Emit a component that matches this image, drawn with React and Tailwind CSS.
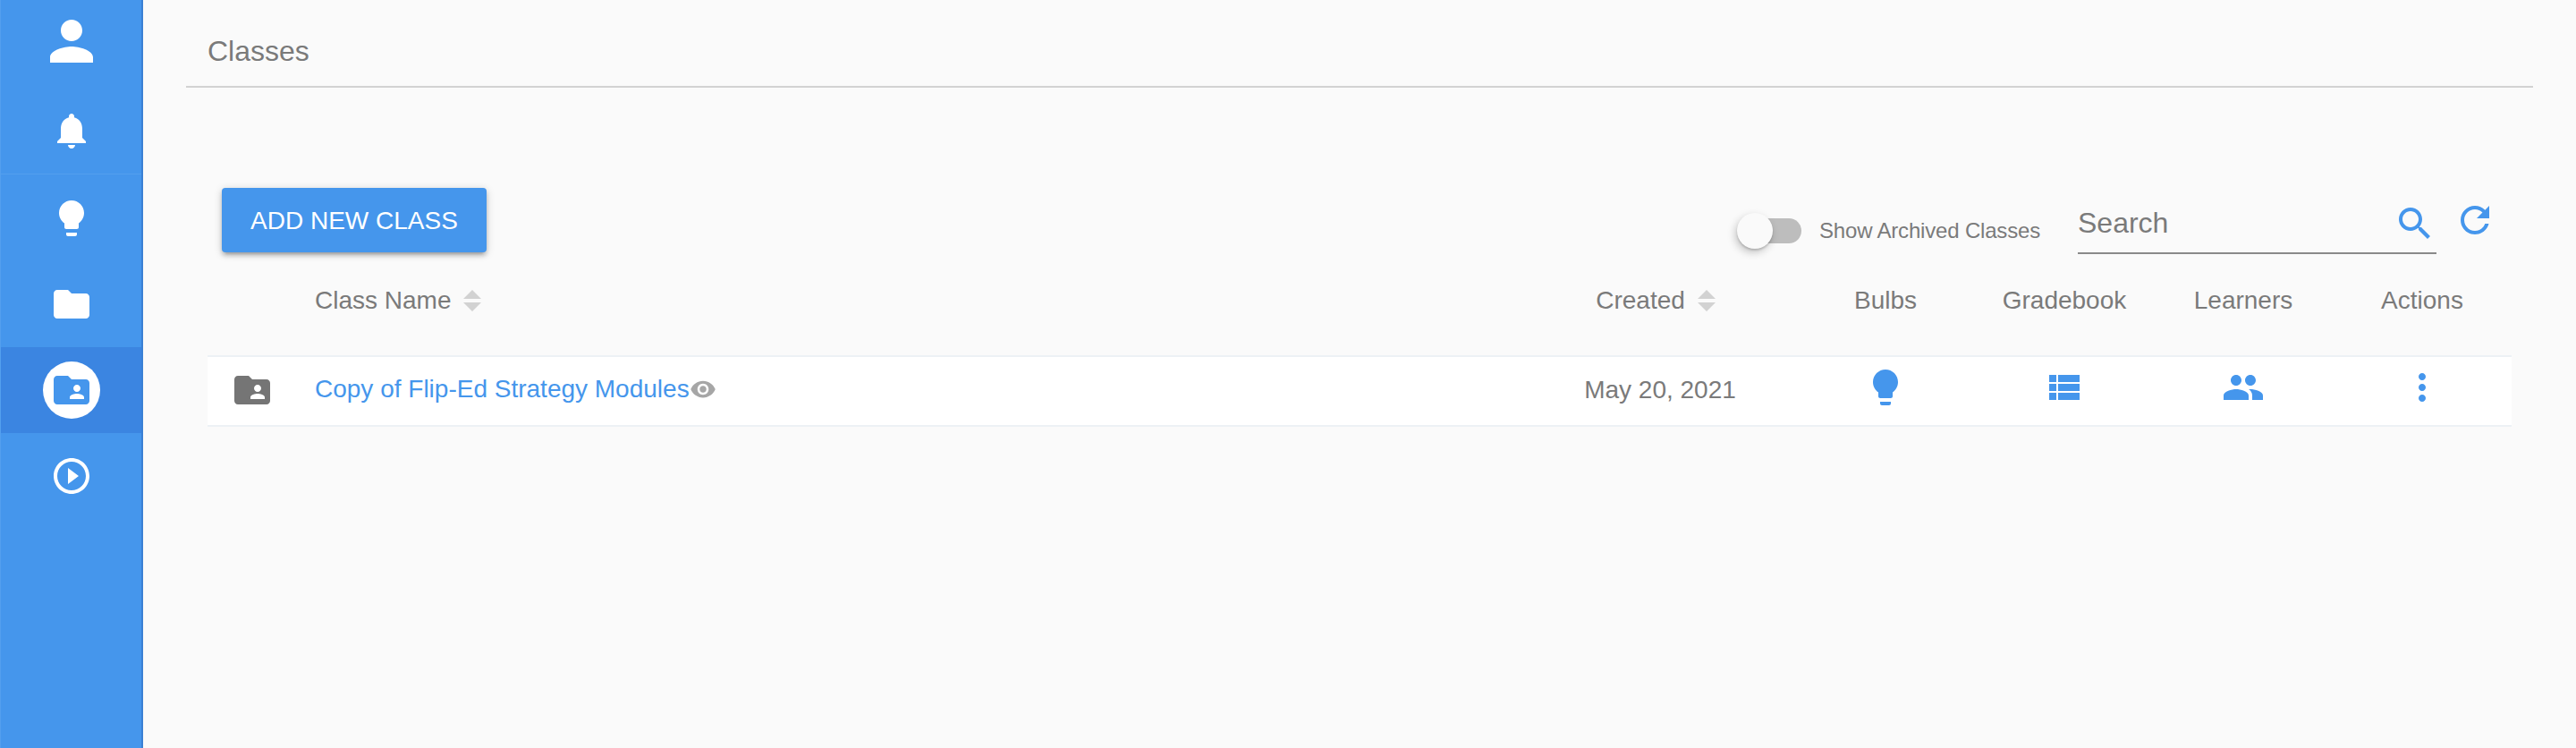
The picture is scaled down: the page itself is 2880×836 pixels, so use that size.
const ICONS = {
  person: "M12 12c2.21 0 4-1.79 4-4s-1.79-4-4-4-4 1.79-4 4 1.79 4 4 4zm0 2c-2.67 0-8 1.34-8 4v2h16v-2c0-2.66-5.33-4-8-4z",
  bell: "M12 22c1.1 0 2-.9 2-2h-4c0 1.1.89 2 2 2zm6-6v-5c0-3.07-1.64-5.64-4.5-6.32V4c0-.83-.67-1.5-1.5-1.5s-1.5.67-1.5 1.5v.68C7.63 5.36 6 7.92 6 11v5l-2 2v1h16v-1l-2-2z",
  bulb: "M9 21c0 .55.45 1 1 1h4c.55 0 1-.45 1-1v-1H9v1zm3-19C8.14 2 5 5.14 5 9c0 2.38 1.19 4.47 3 5.74V17c0 .55.45 1 1 1h6c.55 0 1-.45 1-1v-2.26c1.81-1.27 3-3.36 3-5.74 0-3.86-3.14-7-7-7z",
  folder: "M10 4H4c-1.1 0-1.99.9-1.99 2L2 18c0 1.1.9 2 2 2h16c1.1 0 2-.9 2-2V8c0-1.1-.9-2-2-2h-8l-2-2z",
  folderShared: "M20 6h-8l-2-2H4c-1.1 0-1.99.9-1.99 2L2 18c0 1.1.9 2 2 2h16c1.1 0 2-.9 2-2V8c0-1.1-.9-2-2-2zm-5 3c1.1 0 2 .9 2 2s-.9 2-2 2-2-.9-2-2 .9-2 2-2zm4 8h-8v-1c0-1.33 2.67-2 4-2s4 .67 4 2v1z",
  play: "M10 16.5l6-4.5-6-4.5v9zM12 2C6.48 2 2 6.48 2 12s4.48 10 10 10 10-4.48 10-10S17.52 2 12 2zm0 18c-4.41 0-8-3.59-8-8s3.59-8 8-8 8 3.59 8 8-3.59 8-8 8z",
  search: "M15.5 14h-.79l-.28-.27C15.41 12.59 16 11.11 16 9.5 16 5.91 13.09 3 9.5 3S3 5.91 3 9.5 5.91 16 9.5 16c1.61 0 3.09-.59 4.23-1.57l.27.28v.79l5 4.99L20.49 19l-4.99-5zm-6 0C7.01 14 5 11.99 5 9.5S7.01 5 9.5 5 14 7.01 14 9.5 11.99 14 9.5 14z",
  refresh: "M17.65 6.35C16.2 4.9 14.21 4 12 4c-4.42 0-7.99 3.58-7.99 8s3.57 8 7.99 8c3.73 0 6.84-2.55 7.73-6h-2.08c-.82 2.33-3.04 4-5.65 4-3.31 0-6-2.69-6-6s2.69-6 6-6c1.66 0 3.14.69 4.22 1.78L13 11h7V4l-2.35 2.35z",
  list: "M4 14h4v-4H4v4zm0 5h4v-4H4v4zM4 9h4V5H4v4zm5 5h12v-4H9v4zm0 5h12v-4H9v4zM9 5v4h12V5H9z",
  people: "M16 11c1.66 0 2.99-1.34 2.99-3S17.66 5 16 5c-1.66 0-3 1.34-3 3s1.34 3 3 3zm-8 0c1.66 0 2.99-1.34 2.99-3S9.66 5 8 5C6.34 5 5 6.34 5 8s1.34 3 3 3zm0 2c-2.33 0-7 1.17-7 3.5V19h14v-2.5c0-2.33-4.67-3.5-7-3.5zm8 0c-.29 0-.62.02-.97.05 1.16.84 1.97 1.97 1.97 3.45V19h6v-2.5c0-2.33-4.67-3.5-7-3.5z",
  more: "M12 8c1.1 0 2-.9 2-2s-.9-2-2-2-2 .9-2 2 .9 2 2 2zm0 2c-1.1 0-2 .9-2 2s.9 2 2 2 2-.9 2-2-.9-2-2-2zm0 6c-1.1 0-2 .9-2 2s.9 2 2 2 2-.9 2-2-.9-2-2-2z",
  eye: "M12 4.5C7 4.5 2.73 7.61 1 12c1.73 4.39 6 7.5 11 7.5s9.27-3.11 11-7.5c-1.73-4.39-6-7.5-11-7.5zM12 17c-2.76 0-5-2.24-5-5s2.24-5 5-5 5 2.24 5 5-2.24 5-5 5zm0-8c-1.66 0-3 1.34-3 3s1.34 3 3 3 3-1.34 3-3-1.34-3-3-3z",
};

function Icon({ name, className }) {
  return (
    <svg viewBox="0 0 24 24" fill="currentColor" className={className}>
      <path d={ICONS[name]} />
    </svg>
  );
}

function SortArrows() {
  return (
    <svg width="20" height="24" viewBox="0 0 20 24" fill="#d2d2d2" className="shrink-0">
      <path d="M10 0l10 10H0zM0 14h20L10 24z" />
    </svg>
  );
}

function Sidebar() {
  return (
    <aside className="w-[160px] shrink-0 bg-[#4596ec] border-l border-l-[#539fee] border-r-2 border-r-[#3a80d4] text-white flex flex-col">
      <div className="h-[195px] border-b border-[#539fee] flex flex-col items-center pt-[10px] gap-[40px]">
        <Icon name="person" className="w-[72px] h-[72px]" />
        <Icon name="bell" className="w-[48px] h-[48px]" />
      </div>
      <div className="h-[97px] pt-px flex items-center justify-center">
        <Icon name="bulb" className="w-[48px] h-[48px]" />
      </div>
      <div className="h-[96px] flex items-center justify-center">
        <Icon name="folder" className="w-[48px] h-[48px]" />
      </div>
      <div className="h-[96px] bg-[#3b85e1] flex items-center justify-center">
        <span className="w-[64px] h-[64px] rounded-full bg-white text-[#4596ec] flex items-center justify-center">
          <Icon name="folderShared" className="w-[48px] h-[48px]" />
        </span>
      </div>
      <div className="h-[96px] flex items-center justify-center">
        <Icon name="play" className="w-[48px] h-[48px]" />
      </div>
    </aside>
  );
}

function Toolbar() {
  return (
    <div className="h-[72px] mt-[112px] flex justify-between items-start">
      <button className="ml-[16px] h-[72px] w-[296px] pt-[2px] rounded-[4px] bg-[#4596ec] text-white text-[28px] shadow-[0_2px_10px_rgba(0,0,0,0.2),0_4px_4px_rgba(0,0,0,0.14),0_6px_2px_-4px_rgba(0,0,0,0.12)]">
        ADD NEW CLASS
      </button>
      <div className="flex items-start mr-[17px]">
        <div className="relative w-[72px] h-[28px] mt-[34px]">
          <div className="ml-[16px] w-[56px] h-[28px] rounded-r-full bg-[#bdbdbd]" />
          <div className="absolute left-0 top-[-6px] w-[40px] h-[40px] rounded-full bg-[#fafafa] shadow-[0_2px_2px_rgba(0,0,0,0.14),-2px_4px_10px_rgba(0,0,0,0.22)]" />
        </div>
        <span className="ml-[20px] mt-[34px] text-[24px] leading-[28px] whitespace-nowrap tracking-[-0.18px]">
          Show Archived Classes
        </span>
        <div className="ml-[42px] w-[401px] h-[75px] mt-[-1px] border-b-2 border-[#8a8a8a] flex items-start">
          <input
            placeholder="Search"
            className="flex-1 min-w-0 h-[48px] mt-[16px] bg-transparent outline-none text-[32px] placeholder:text-[#7a7a7a]"
          />
          <Icon name="search" className="w-[48px] h-[48px] mt-[17px] text-[#4596ec] shrink-0" />
        </div>
        <Icon name="refresh" className="ml-[19px] mt-[12px] w-[48px] h-[48px] text-[#4596ec]" />
      </div>
    </div>
  );
}

const columns = "grid grid-cols-[120px_1fr_304px_200px_200px_200px_200px] items-center";

export default function App() {
  return (
    <div className="h-[836px] flex bg-[#fafafa] text-[#7a7a7a] font-['Liberation_Sans',Arial,sans-serif]">
      <Sidebar />
      <main className="flex-1 min-w-0 px-[48px]">
        <div className="h-[98px] border-b-2 border-[#d2d2d2] pl-[24px] pt-[38px] text-[32px] leading-[38px]">
          Classes
        </div>
        <div className="px-[24px]">
          <Toolbar />
          <div className={`${columns} h-[106px] pt-[2px] text-[28px]`}>
            <div />
            <div className="flex items-center gap-[14px]">
              <span>Class Name</span>
              <SortArrows />
            </div>
            <div className="flex items-center justify-center gap-[14px] pr-[10px]">
              <span>Created</span>
              <SortArrows />
            </div>
            <div className="text-center">Bulbs</div>
            <div className="text-center">Gradebook</div>
            <div className="text-center">Learners</div>
            <div className="text-center">Actions</div>
          </div>
          <div className={`${columns} mt-[9px] h-[80px] bg-white border-y-2 border-[#edf1f5] text-[28px]`}>
            <div className="pl-[26px] pb-[2px]">
              <Icon name="folderShared" className="w-[48px] h-[48px] text-[#757575]" />
            </div>
            <div className="flex items-center pb-[4px]">
              <a className="text-[#4596ec]">Copy of Flip-Ed Strategy Modules</a>
              <Icon name="eye" className="w-[30px] h-[30px] text-[#a6a6a6]" />
            </div>
            <div className="text-center pb-[3px]">May 20, 2021</div>
            <div className="flex justify-center pb-[8px]">
              <Icon name="bulb" className="w-[48px] h-[48px] text-[#4596ec]" />
            </div>
            <div className="flex justify-center pb-[8px] pr-[2px]">
              <Icon name="list" className="w-[48px] h-[48px] text-[#4596ec]" />
            </div>
            <div className="flex justify-center pb-[8px]">
              <Icon name="people" className="w-[48px] h-[48px] text-[#4596ec]" />
            </div>
            <div className="flex justify-center pb-[8px]">
              <Icon name="more" className="w-[48px] h-[48px] text-[#4596ec]" />
            </div>
          </div>
        </div>
      </main>
    </div>
  );
}
